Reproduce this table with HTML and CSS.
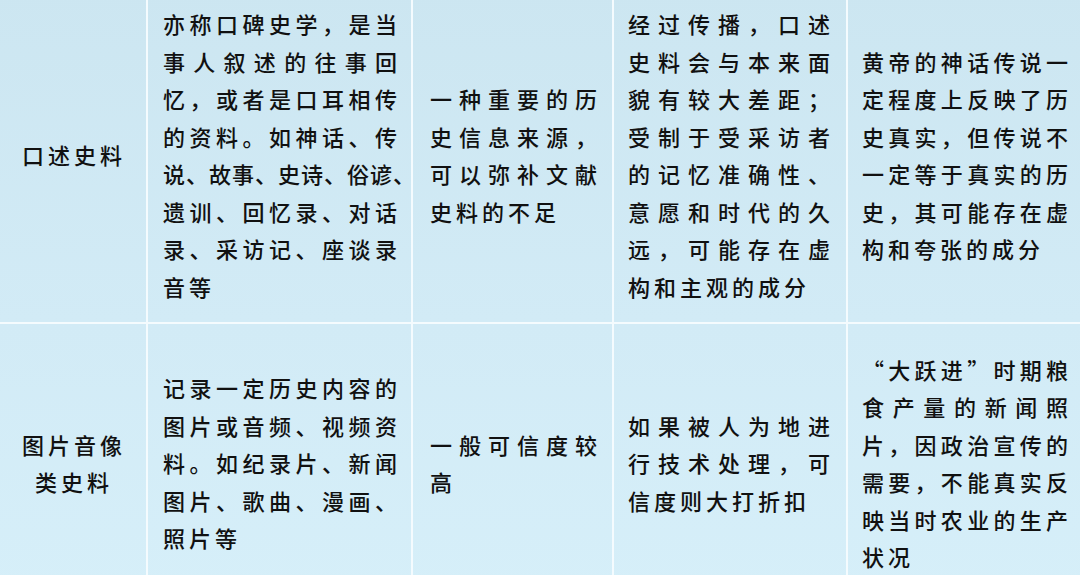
FILE: index.html
```html
<!DOCTYPE html>
<html lang="zh-CN">
<head>
<meta charset="utf-8">
<title>史料类型</title>
<link rel="stylesheet" href="styles.css">
</head>
<body>
<div class="frame">
  <div class="table">
    <div class="cell c1 r1"><div class="txt center"><span class="ln">口述史料</span></div></div>
    <div class="cell c2 r1"><div class="txt">
      <span class="ln j">亦称口碑史学，是当</span>
      <span class="ln j">事人叙述的往事回</span>
      <span class="ln j">忆，或者是口耳相传</span>
      <span class="ln j">的资料。如神话、传</span>
      <span class="ln j tight">说、故事、史诗、俗谚、</span>
      <span class="ln j">遗训、回忆录、对话</span>
      <span class="ln j">录、采访记、座谈录</span>
      <span class="ln">音等</span>
    </div></div>
    <div class="cell c3 r1"><div class="txt">
      <span class="ln j">一种重要的历</span>
      <span class="ln j">史信息来源，</span>
      <span class="ln j">可以弥补文献</span>
      <span class="ln">史料的不足</span>
    </div></div>
    <div class="cell c4 r1"><div class="txt">
      <span class="ln j">经过传播，口述</span>
      <span class="ln j">史料会与本来面</span>
      <span class="ln j">貌有较大差距；</span>
      <span class="ln j">受制于受采访者</span>
      <span class="ln j">的记忆准确性、</span>
      <span class="ln j">意愿和时代的久</span>
      <span class="ln j">远，可能存在虚</span>
      <span class="ln">构和主观的成分</span>
    </div></div>
    <div class="cell c5 r1"><div class="txt">
      <span class="ln j">黄帝的神话传说一</span>
      <span class="ln j">定程度上反映了历</span>
      <span class="ln j">史真实，但传说不</span>
      <span class="ln j">一定等于真实的历</span>
      <span class="ln j">史，其可能存在虚</span>
      <span class="ln">构和夸张的成分</span>
    </div></div>

    <div class="cell c1 r2"><div class="txt center">
      <span class="ln">图片音像</span>
      <span class="ln">类史料</span>
    </div></div>
    <div class="cell c2 r2"><div class="txt">
      <span class="ln j">记录一定历史内容的</span>
      <span class="ln j">图片或音频、视频资</span>
      <span class="ln j">料。如纪录片、新闻</span>
      <span class="ln j">图片、歌曲、漫画、</span>
      <span class="ln">照片等</span>
    </div></div>
    <div class="cell c3 r2"><div class="txt">
      <span class="ln j">一般可信度较</span>
      <span class="ln">高</span>
    </div></div>
    <div class="cell c4 r2"><div class="txt">
      <span class="ln j">如果被人为地进</span>
      <span class="ln j">行技术处理，可</span>
      <span class="ln">信度则大打折扣</span>
    </div></div>
    <div class="cell c5 r2"><div class="txt">
      <span class="ln j">“大跃进”时期粮</span>
      <span class="ln j">食产量的新闻照</span>
      <span class="ln j">片，因政治宣传的</span>
      <span class="ln j">需要，不能真实反</span>
      <span class="ln j">映当时农业的生产</span>
      <span class="ln">状况</span>
    </div></div>
  </div>
</div>
</body>
</html>
```

FILE: styles.css
```css
html, body {
  margin: 0;
  padding: 0;
  background: #d2ebf5;
}

.frame {
  width: 1080px;
  height: 575px;
  overflow: hidden;
}

.table {
  display: grid;
  grid-template-columns: 146px 263px 199px 232px 232px;
  grid-template-rows: 334px 278px;
  gap: 2px;
  margin-top: -12px;
  background: #f4fbfe;
  font-family: "Noto Sans CJK SC", "Noto Sans", sans-serif;
  font-size: 22px;
  font-weight: 500;
  line-height: 37.5px;
  letter-spacing: 4px;
  color: #111;
}

.cell {
  background: #d2ebf5;
  display: flex;
  flex-direction: column;
  justify-content: center;
}

.r1 {
  background: linear-gradient(180deg, #cce6f1 0%, #d2ebf6 100%);
}

.r2 {
  background: linear-gradient(180deg, #d2ebf6 0%, #d6eff9 100%);
}

.c1 { padding: 0; }
.c2 { padding: 0 10px 0 15px; }
.c3 { padding: 0 11px 0 17px; }
.c4 { padding: 0 12px 0 14px; }
.c5 { padding: 0 8px 0 14px; }

.txt {
  display: flex;
  flex-direction: column;
}

.txt.center {
  align-items: center;
  padding-left: 2px;
}

.ln {
  display: block;
  white-space: nowrap;
  text-align: left;
}

.ln.j {
  text-align: justify;
  text-align-last: justify;
  text-justify: inter-character;
}

.ln.tight {
  letter-spacing: 1px;
}
```
